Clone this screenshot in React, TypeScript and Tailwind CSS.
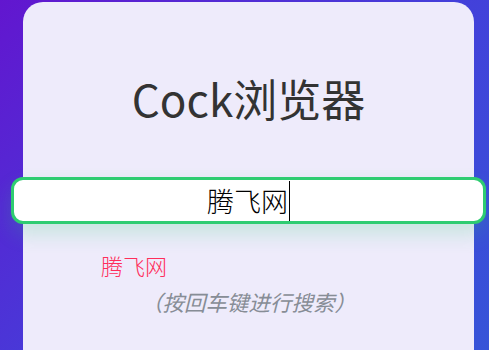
import React from "react";

export default function App() {
  return (
    <div
      className="w-[489px] h-[350px] overflow-hidden pl-[23px] pt-[2px] bg-[linear-gradient(135deg,#6216cf_0%,#4340da_55%,#3654d8_100%)]"
      style={{ fontFamily: '"Noto Sans CJK SC", "Noto Sans", sans-serif' }}
    >
      <div className="w-[451px] h-[400px] rounded-[20px] bg-[#eeebfb] flex flex-col items-center">
        <h1 className="mt-[68px] text-[44px] leading-[56px] font-normal text-[#333333]">
          Cock浏览器
        </h1>
        <div className="mt-[51px] w-[475px] h-[47px] shrink-0 rounded-[12px] border-[3px] border-[#2ecc71] bg-white shadow-[0_10px_20px_rgba(46,204,113,0.2)] flex items-center justify-center">
          <span className="text-[27px] leading-none text-black font-light">腾飞网</span>
          <span className="w-[1px] h-[40px] bg-black ml-[1px]"></span>
        </div>
        <div className="self-start ml-[78px] mt-[29px] text-[22px] leading-[24px] text-[#ff2d5a] font-light">
          腾飞网
        </div>
        <div className="mt-[13px] text-[21.5px] leading-[24px] italic text-[#878d96]">
          （按回车键进行搜索）
        </div>
      </div>
    </div>
  );
}
